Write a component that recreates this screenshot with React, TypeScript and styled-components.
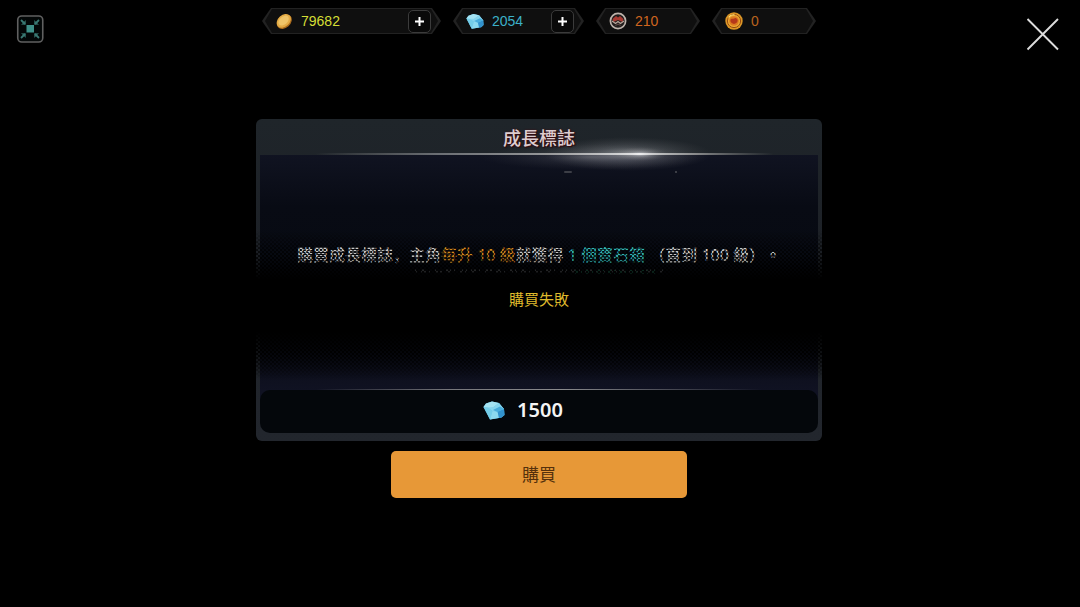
import React from 'react';
import styled, { createGlobalStyle } from 'styled-components';

const GlobalStyle = createGlobalStyle`
  * { box-sizing: border-box; }
  body {
    margin: 0;
    background: #000;
    color: #fff;
    font-family: "Noto Sans CJK TC", sans-serif;
  }
  button { font: inherit; padding: 0; border: 0; cursor: pointer; }
`;

const Page = styled.div`
  min-height: 100vh;
  padding: 8px 18px 8px 16px;
  background: #000;
`;

const TopBar = styled.header`
  display: grid;
  grid-template-columns: 1fr auto 1fr;
  align-items: start;
`;

const IconButton = styled.button<{ $end?: boolean }>`
  display: flex;
  justify-self: ${(p) => (p.$end ? 'end' : 'start')};
  margin-top: ${(p) => (p.$end ? 8 : 7)}px;
  background: none;
`;

const Wallet = styled.ul`
  display: flex;
  flex-wrap: wrap;
  justify-content: center;
  gap: 12px;
  margin: 0;
  padding: 0;
  list-style: none;
`;

const hexagon = 'polygon(2px 50%, 9px 0, calc(100% - 9px) 0, calc(100% - 2px) 50%, calc(100% - 9px) 100%, 9px 100%)';
const hexagonWithTips =
  'polygon(0 50%, 2px 10px, 9px 0, calc(100% - 9px) 0, calc(100% - 2px) 10px, 100% 50%, calc(100% - 2px) 16px, calc(100% - 9px) 100%, 9px 100%, 2px 16px)';

const Pill = styled.li<{ $width: number }>`
  position: relative;
  isolation: isolate;
  display: flex;
  align-items: center;
  gap: 8px;
  width: ${(p) => p.$width}px;
  height: 26px;
  padding: 0 10px 0 13px;

  &::before, &::after {
    content: "";
    position: absolute;
    z-index: -1;
  }
  &::before {
    inset: 0;
    background: #222;
    clip-path: ${hexagonWithTips};
  }
  &::after {
    inset: 1px;
    background: #0f0f0f;
    clip-path: ${hexagon};
  }
`;

const Amount = styled.span<{ $color: string }>`
  flex: 1;
  color: ${(p) => p.$color};
  font: 14px/26px "Liberation Sans", sans-serif;
`;

const PlusButton = styled.button`
  display: flex;
  align-items: center;
  justify-content: center;
  width: 23px;
  height: 23px;
  border: 1px solid #3b3b3b;
  border-radius: 5px;
  background: #090909;
`;

const Main = styled.main`
  display: flex;
  flex-direction: column;
  align-items: center;
  gap: 10px;
  padding-top: 67px;
`;

const Panel = styled.section`
  position: relative;
  width: 100%;
  max-width: 566px;
  padding: 0 4px 8px;
  border-radius: 6px;
  background: linear-gradient(#1f252a, #1d2127 40%, #22262d);
`;

const PanelHeader = styled.div`
  position: relative;
  height: 36px;
`;

const Title = styled.h1`
  position: relative;
  z-index: 2;
  margin: 0;
  color: #dccdd0;
  font-size: 18px;
  font-weight: 500;
  line-height: 36px;
  text-align: center;
  text-shadow: 0 0 2px #4a1015, 1px 1px 1px #2a080c;
`;

const Flare = styled.svg`
  position: absolute;
  left: 0;
  top: 12px;
  width: 100%;
  height: 48px;
  pointer-events: none;
  z-index: 1;
`;

const PanelBody = styled.div`
  height: 235px;
  padding-top: 86px;
  background: linear-gradient(#101321, #080b14 22%, #070a12 50%, #080a13 78%, #101222);
`;

const Description = styled.p`
  margin: 0;
  color: #dcdcdc;
  font-family: "Noto Sans", "Noto Sans CJK TC", sans-serif;
  font-size: 16px;
  font-weight: 500;
  line-height: 26px;
  text-align: center;
  white-space: nowrap;
  text-spacing-trim: space-all;
`;

const LowComma = styled.span`
  font-family: "Noto Sans CJK JP", sans-serif;
`;

const Mark = styled.em<{ $color: string }>`
  color: ${(p) => p.$color};
  font-style: normal;
`;

const FadedMarks = styled.svg`
  display: block;
  width: 248px;
  height: 8px;
  margin: 0 auto;
`;

const Shade = styled.div`
  position: absolute;
  z-index: 2;
  left: 0;
  right: 0;
  top: 108px;
  height: 154px;
  display: flex;
  justify-content: center;
  background: linear-gradient(transparent, rgba(0, 0, 0, 0.12) 18%, #000 34%, #000 68%, transparent);

  &::before {
    content: "";
    position: absolute;
    inset: 0;
    background: repeating-conic-gradient(#000 0 25%, transparent 0 50%) 0 0 / 4px 4px;
    mask-image: linear-gradient(transparent 3%, rgba(0, 0, 0, 0.65) 16%, #000 34%, #000 80%, transparent 98%);
  }
`;

const Toast = styled.p`
  position: relative;
  margin: 61px 0 0;
  color: #dfb92c;
  font-size: 15px;
  line-height: 22px;
`;

const Price = styled.div`
  position: relative;
  display: flex;
  align-items: center;
  justify-content: center;
  gap: 12px;
  height: 43px;
  padding: 0 32px 3px 0;
  border-radius: 10px;
  background: #04070b;
  font: 600 20px/40px "Noto Sans", sans-serif;
  color: #f4f4f4;

  &::before {
    content: "";
    position: absolute;
    top: -1px;
    left: 10%;
    right: 10%;
    height: 1px;
    background: linear-gradient(90deg, transparent, #77777c 30%, #8b8b8e 55%, transparent);
  }
`;

const PriceFooter = styled.div`
  background: linear-gradient(#101222 50%, #22262d 50%);
`;

const BuyButton = styled.button`
  width: 100%;
  max-width: 296px;
  height: 47px;
  padding-bottom: 2px;
  border-radius: 5px;
  background: #e79837;
  color: #54300c;
  font-size: 17px;
  line-height: 44px;
`;

const Coin = () => (
  <svg width="18" height="18" viewBox="0 0 18 18" aria-hidden="true">
    <ellipse cx="9.3" cy="9.7" rx="8.4" ry="6.2" transform="rotate(-42 9.3 9.7)" fill="#a96a1c" />
    <ellipse cx="8.8" cy="8.8" rx="8" ry="5.8" transform="rotate(-42 8.8 8.8)" fill="#e3aa44" />
    <ellipse cx="8.6" cy="8.6" rx="6" ry="4" transform="rotate(-42 8.6 8.6)" fill="#efc468" />
  </svg>
);

const Gem = ({ size = 18 }: { size?: number }) => (
  <svg width={size} height={size} viewBox="0 0 22 22" aria-hidden="true">
    <path d="M.5 8 3 4.500 9 2.500l7 1.500L21 10l.5 6-3 2.500L7 20.500z" fill="#5cbde6" />
    <path d="M.5 8 3 4.500 9 2.500l7 1.500L10 8.500 4.500 9.500z" fill="#a4e3f3" />
    <path d="m.5 8 4 .3L9.500 12 7 20.500z" fill="#74cde8" />
    <path d="M4.500 8.300H10L16 4l5 6-6.500 2.500-5-.5z" fill="#86d5ee" />
    <path d="m9.500 12 5 .5 1.500 6.400-9 1.600z" fill="#8cd9ef" />
    <path d="m14.500 12.500 6.500-2.500.5 6-3 2.500-2.500.5z" fill="#3292cd" />
    <path d="m10 11 7-3.500L21 10l-6.500 3z" fill="#49addc" />
  </svg>
);

const Badge = () => (
  <svg width="18" height="18" viewBox="0 0 18 18" aria-hidden="true">
    <circle cx="9" cy="9" r="7.6" fill="#201c1b" stroke="#bcb2aa" strokeWidth="1.7" />
    <path d="M3.500 7 7 4l2 1.500L11 4l3.500 3-1 3L9 8l-4.500 2z" fill="#a83a32" />
    <path d="m3 9 3.500 2.500L9 9.500l2.500 2L15 9" fill="none" stroke="#b8a69b" strokeWidth="1.2" />
    <path d="m6.500 13.500 2.500-1.500 2.500 1.500" fill="none" stroke="#6b504a" />
  </svg>
);

const Token = () => (
  <svg width="18" height="18" viewBox="0 0 18 18" aria-hidden="true">
    <circle cx="9" cy="9" r="8.7" fill="#dc9626" />
    <circle cx="9" cy="9" r="6.6" fill="#eaa831" stroke="#964b12" />
    <circle cx="9" cy="9" r="4.8" fill="#dd7a20" />
    <path d="M5.500 7.500c1-1.500 2 0 3.500-1s2.500-.5 3.500 1c.5 2-.5 4-3.500 4.500-3-.5-4-2.500-3.500-4.500z" fill="#b5381a" />
    <path d="M3.500 5.500a6.500 6.500 0 0 1 6-2.700" fill="none" stroke="#ffe477" strokeWidth="1.2" />
  </svg>
);

const Plus = () => (
  <svg width="11" height="11" viewBox="0 0 11 11" aria-hidden="true">
    <path d="M5.500 1v9M1 5.500h9" stroke="#fff" strokeWidth="2" />
  </svg>
);

const Shrink = () => (
  <svg width="28" height="28" viewBox="0 0 28 28" aria-hidden="true">
    <rect x="1.750" y="1" width="25" height="26" rx="4" fill="#030707" stroke="#606060" strokeWidth="1.6" />
    <rect x="10.500" y="10" width="7.500" height="7.500" fill="#3f9189" />
    <path d="m5 5 4 4M23 5l-4 4M5 23l4-4M23 23l-4-4" stroke="#3a7973" strokeWidth="1.8" />
    <path d="M9.800 5v4.800H5zM18.200 5v4.800H23zM9.800 23v-4.800H5zM18.200 23v-4.800H23z" fill="#3a7973" opacity=".8" />
  </svg>
);

const Cross = () => (
  <svg width="36" height="36" viewBox="0 0 36 36" aria-hidden="true">
    <path d="m1.500 3 30.500 30.500M32 3 1.500 33.500" stroke="#dcdcdc" strokeWidth="1.9" />
  </svg>
);

const TitleFlare = () => (
  <Flare viewBox="0 0 558 48" preserveAspectRatio="none" aria-hidden="true">
    <defs>
      <linearGradient id="line">
        <stop offset=".1" stopColor="#999" stopOpacity="0" />
        <stop offset=".32" stopColor="#85888d" />
        <stop offset=".52" stopColor="#bbb" />
        <stop offset=".68" stopColor="#fff" />
        <stop offset=".78" stopColor="#aaa" />
        <stop offset=".92" stopColor="#999" stopOpacity="0" />
      </linearGradient>
      <radialGradient id="glow">
        <stop offset="0" stopColor="#dfe0e2" stopOpacity=".6" />
        <stop offset=".4" stopColor="#a0a2a8" stopOpacity=".32" />
        <stop offset="1" stopColor="#777" stopOpacity="0" />
      </radialGradient>
    </defs>
    <ellipse cx="368" cy="23" rx="84" ry="17" fill="url(#glow)" opacity=".85" />
    <ellipse cx="330" cy="26" rx="110" ry="13" fill="url(#glow)" opacity=".4" />
    <ellipse cx="381" cy="23" rx="26" ry="7" fill="url(#glow)" />
    <ellipse cx="379" cy="23" rx="18" ry="4" fill="url(#glow)" />
    <rect x="0" y="22" width="558" height="2" fill="url(#line)" opacity=".75" />
    <rect x="304" y="40" width="8" height="2" rx="1" fill="#3c3e46" />
    <rect x="415" y="40" width="2" height="2" fill="#3c3e46" />
  </Flare>
);

const currencies = [
  { name: '金幣', amount: '79682', color: '#d5de35', width: 179, icon: <Coin />, canAdd: true },
  { name: '寶石', amount: '2054', color: '#3cb1c8', width: 131, icon: <Gem />, canAdd: true },
  { name: '徽章', amount: '210', color: '#cf661f', width: 104, icon: <Badge />, canAdd: false },
  { name: '代幣', amount: '0', color: '#b9631e', width: 104, icon: <Token />, canAdd: false },
];

export default function App() {
  return (
    <Page lang="zh-Hant">
      <GlobalStyle />
      <TopBar>
        <IconButton aria-label="縮小"><Shrink /></IconButton>
        <Wallet>
          {currencies.map((c) => (
            <Pill key={c.name} $width={c.width}>
              {c.icon}
              <Amount $color={c.color}>{c.amount}</Amount>
              {c.canAdd && <PlusButton aria-label={`增加${c.name}`}><Plus /></PlusButton>}
            </Pill>
          ))}
        </Wallet>
        <IconButton $end aria-label="關閉"><Cross /></IconButton>
      </TopBar>
      <Main>
        <Panel>
          <PanelHeader>
            <Title>成長標誌</Title>
            <TitleFlare />
          </PanelHeader>
          <PanelBody>
            <Description>
              購買成長標誌<LowComma lang="ja">，</LowComma>主角<Mark $color="#e8951f">每升 10 級</Mark>就獲得{' '}
              <Mark $color="#36c9c9">1 個寶石箱</Mark> （直到 100 級）。
            </Description>
            <FadedMarks viewBox="0 0 248 8" aria-hidden="true">
              <path d="M0 3h248" stroke="#6d7075" strokeWidth="3" strokeDasharray="2 4 5 3 1 5 3 2" />
              <path d="M160 4h80" stroke="#237a5d" strokeWidth="4" strokeDasharray="3 3 1 4" />
            </FadedMarks>
          </PanelBody>
          <PriceFooter>
            <Price><Gem size={22} />1500</Price>
          </PriceFooter>
          <Shade><Toast role="status">購買失敗</Toast></Shade>
        </Panel>
        <BuyButton>購買</BuyButton>
      </Main>
    </Page>
  );
}
